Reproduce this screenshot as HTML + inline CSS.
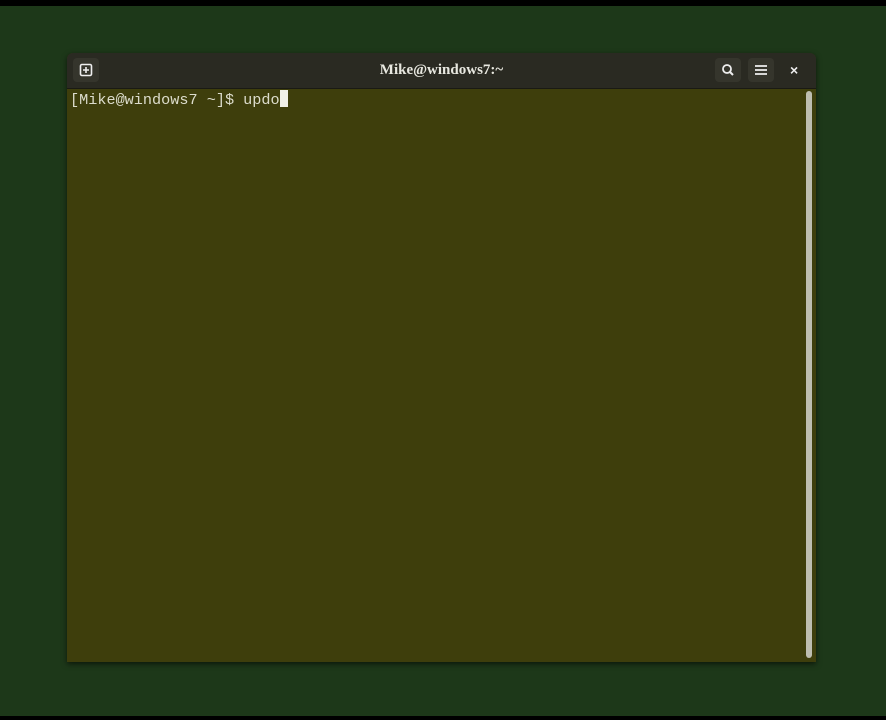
<!DOCTYPE html>
<html><head><style>
html,body{margin:0;padding:0}
body{width:886px;height:720px;background:#1d3819;position:relative;overflow:hidden;font-family:"Liberation Sans",sans-serif}
.top{position:absolute;left:0;top:0;width:886px;height:6px;background:#000}
.bot{position:absolute;left:0;top:716px;width:886px;height:4px;background:#000}
.win{position:absolute;left:67px;top:53px;width:749px;height:609px;background:#3e3e0c;box-shadow:0 2px 6px rgba(0,0,0,.6);border-radius:6px 6px 0 0;overflow:hidden}
.hdr{position:absolute;left:0;top:0;width:749px;height:35px;background:#2a2a22;border-bottom:1px solid #1a1a14}
.title{position:absolute;left:0;width:749px;top:9px;text-align:center;color:#e8e8e0;font-weight:bold;font-size:15px;font-family:"Liberation Serif",serif}
.btn{position:absolute;top:5px;width:26px;height:24px;background:#35352c;border-radius:4px}
.term{position:absolute;left:3px;top:37px;color:#dcdccc;font-family:"Liberation Mono",monospace;font-size:15.2px;line-height:18px;white-space:pre}
.cur{display:inline-block;width:8px;height:17px;background:#f0f0e8;vertical-align:-3px}
.sb{position:absolute;left:739px;top:38px;width:6px;height:567px;background:#bdbdb0;border-radius:3px}
</style></head><body>
<div class="top"></div><div class="bot"></div>
<div class="win">
<div class="hdr">
<div class="btn" style="left:6px"><svg width="26" height="24"><rect x="7.5" y="6.5" width="11" height="11" rx="1.5" fill="none" stroke="#eee" stroke-width="1.6"/><path d="M13 9v6M10 12h6" stroke="#eee" stroke-width="1.6"/></svg></div>
<div class="title">Mike@windows7:~</div>
<div class="btn" style="left:648px"><svg width="26" height="24"><circle cx="12" cy="11" r="4" fill="none" stroke="#eee" stroke-width="1.8"/><path d="M15 14l3 3" stroke="#eee" stroke-width="2"/></svg></div>
<div class="btn" style="left:681px"><svg width="26" height="24"><path d="M7 8h12M7 12h12M7 16h12" stroke="#eee" stroke-width="1.8"/></svg></div>
<div style="position:absolute;left:723px;top:9px;color:#eee;font-size:14px;font-weight:bold">×</div>
</div>
<div class="term">[Mike@windows7 ~]$ updo<span class="cur"></span></div>
<div class="sb"></div>
</div>
</body></html>
